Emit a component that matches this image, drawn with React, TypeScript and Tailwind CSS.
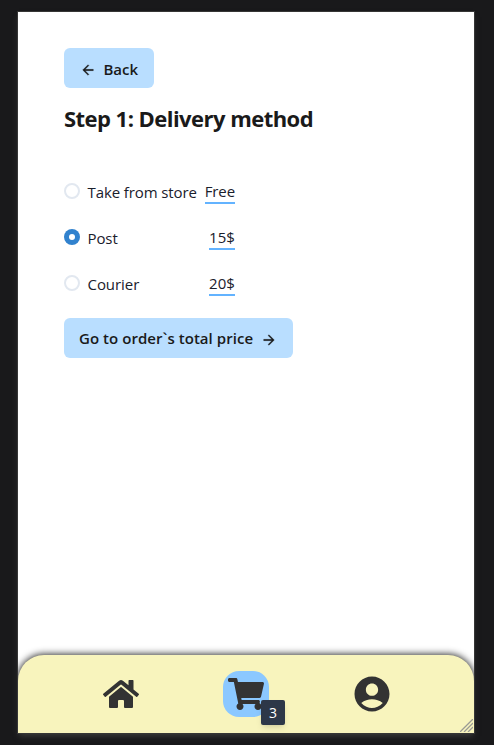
import type { ReactNode } from "react";
import { MdAccountCircle } from "react-icons/md";
import { FaHome, FaShoppingCart } from "react-icons/fa";

type Option = { label: string; price: string; checked?: boolean; tracking: string; priceTracking: string };

const options: Option[] = [
  { label: "Take from store", price: "Free", tracking: "tracking-[-0.1px]", priceTracking: "tracking-[-0.1px]" },
  { label: "Post", price: "15$", checked: true, tracking: "tracking-[-0.1px]", priceTracking: "tracking-[0.1px]" },
  { label: "Courier", price: "20$", tracking: "tracking-[-0.05px]", priceTracking: "tracking-[0.1px]" },
];

function Button({ children, className }: { children: ReactNode; className: string }) {
  return (
    <button
      className={`flex h-10 items-center rounded-md bg-[#b9deff] text-[15px] font-semibold whitespace-nowrap text-[#1a1a1a] ${className}`}
    >
      {children}
    </button>
  );
}

function Arrow({ className }: { className?: string }) {
  return (
    <svg
      viewBox="0 0 24 24"
      fill="currentColor"
      stroke="currentColor"
      strokeWidth="0.4"
      className={`mt-1 size-4 shrink-0 ${className ?? ""}`}
    >
      <path d="M12 4l-1.41 1.41L16.17 11H4v2h12.17l-5.58 5.59L12 20l8-8z" />
    </svg>
  );
}

function Radio({ checked }: { checked?: boolean }) {
  return checked ? (
    <span className="flex size-4 shrink-0 items-center justify-center rounded-full bg-[#3182ce]">
      <span className="size-1.5 rounded-full bg-white" />
    </span>
  ) : (
    <span className="size-4 shrink-0 rounded-full border-2 border-[#e2e8f0]" />
  );
}

export default function App() {
  return (
    <div className="h-[745px] w-[494px] overflow-hidden bg-[#19191b] pt-3 pl-[18px] font-['Open_Sans','Noto_Sans',sans-serif]">
      <div className="flex h-[721px] w-[456px] flex-col bg-white shadow-[0_0_0_1px_#363636,0_4px_6px_-1px_#3c3c3c]">
        <main className="flex flex-1 flex-col items-start overflow-hidden pt-9 pl-[46px]">
          <Button className="w-[90px] gap-[7.5px] pl-4 tracking-[-0.05px]">
            <Arrow className="rotate-180" />
            <span className="mt-0.5">Back</span>
          </Button>
          <h1 className="mt-[13px] text-[22px] leading-[34px] font-bold tracking-[-0.54px] whitespace-nowrap text-[#1a1a1a]">
            Step 1: Delivery method
          </h1>
          <div className="mt-11 flex w-[171px] flex-col gap-[22px]">
            {options.map((option) => (
              <label key={option.label} className="flex h-6 items-center text-[15px] leading-6 text-[#1a202c]">
                <Radio checked={option.checked} />
                <span className={`mt-px ml-[7.5px] whitespace-nowrap ${option.tracking}`}>{option.label}</span>
                <span className={`ml-auto h-[26px] border-b-2 border-[#63b3ff] leading-[26px] ${option.priceTracking}`}>
                  {option.price}
                </span>
              </label>
            ))}
          </div>
          <Button className="mt-[23px] w-[229px] justify-between pr-4 pl-[15px] tracking-[0.05px]">
            <span className="mt-px">Go to order`s total price</span>
            <Arrow />
          </Button>
        </main>
        <nav className="relative flex h-[78px] shrink-0 items-center rounded-t-[26px] bg-[#f8f4bd] pl-[85px] text-[#333] shadow-[0_0_7px_1px_#333] [clip-path:inset(-20px_0_0_0)]">
          <FaHome className="size-9" />
          <div className="relative ml-[84px] flex size-[46px] items-center justify-center rounded-2xl bg-[#8bc8ff]">
            <FaShoppingCart className="size-9" />
            <span className="absolute top-[29px] left-[38px] flex h-[25px] w-6 items-center justify-center rounded-xs bg-[#2d3748] text-sm text-white shadow-md">
              3
            </span>
          </div>
          <MdAccountCircle className="ml-[82px] size-[42px]" />
          <svg className="absolute right-px bottom-px" width="13" height="13" viewBox="0 0 13 13" fill="none" stroke="#9a9a94" strokeWidth="1.3">
            <path d="M0 13 13 0M4 13 13 4M8 13 13 8" />
          </svg>
        </nav>
      </div>
    </div>
  );
}
